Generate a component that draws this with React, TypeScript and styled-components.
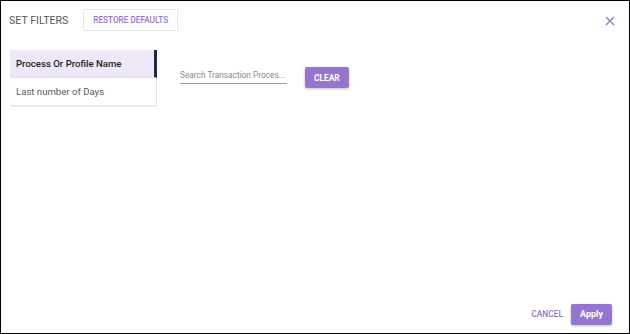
import React from "react";
import styled, { createGlobalStyle } from "styled-components";

const Global = createGlobalStyle`
  html, body { margin: 0; padding: 0; background: #fff; }
  body { font-family: Roboto, "Liberation Sans", sans-serif; }
  * { box-sizing: border-box; }
`;

const PURPLE = "#9575cd";

const Dialog = styled.div`
  width: 630px;
  height: 334px;
  border: 1px solid #000;
  background: #fff;
  display: flex;
  flex-direction: column;
`;

const Header = styled.div`
  height: 38px;
  display: flex;
  align-items: center;
  padding: 0 8px;
  gap: 15px;
`;

const Title = styled.div`
  font-size: 10.6px;
  color: #555;
`;

const OutlineButton = styled.button`
  height: 22px;
  padding: 0 9px;
  background: #fff;
  border: 1px solid #e4e4e4;
  border-radius: 2px;
  color: ${PURPLE};
  font-family: inherit;
  font-size: 8.2px;
  font-weight: 500;
  text-transform: uppercase;
`;

const Close = styled.button`
  margin-left: auto;
  margin-right: 4px;
  margin-top: 2px;
  width: 14px;
  height: 14px;
  padding: 0;
  border: 0;
  background: none;
  display: flex;
  align-items: center;
  justify-content: center;
`;

const Body = styled.div`
  flex: 1;
  display: flex;
  padding-top: 11px;
  padding-left: 9px;
`;

const SideList = styled.div`
  width: 147px;
  display: flex;
  flex-direction: column;
  align-self: flex-start;
`;

const SideItem = styled.div<{ $active?: boolean }>`
  height: 28px;
  display: flex;
  align-items: center;
  padding-left: 6px;
  font-size: 9.6px;
  font-weight: ${(p) => (p.$active ? 500 : 400)};
  color: ${(p) => (p.$active ? "#1f1f1f" : "#5a5a5a")};
  background: ${(p) => (p.$active ? "#ede7f6" : "#fff")};
  border-right: ${(p) => (p.$active ? "3px solid #1b2a4a" : "1px solid #e3e3e3")};
  border-bottom: 1px solid #e3e3e3;
  box-shadow: ${(p) => (p.$active ? "none" : "0 1px 1px rgba(0,0,0,0.06)")};
`;

const Content = styled.div`
  display: flex;
  align-items: flex-start;
  gap: 18px;
  padding-left: 23px;
  padding-top: 17px;
`;

const SearchInput = styled.input`
  width: 107px;
  height: 17px;
  border: 0;
  border-bottom: 1px solid #9e9e9e;
  outline: none;
  font-family: inherit;
  font-size: 8.3px;
  padding: 0;
  color: #333;
  text-overflow: ellipsis;
  &::placeholder { color: #8a8a8a; }
`;

const FilledButton = styled.button`
  height: 21px;
  padding: 0 9px;
  background: ${PURPLE};
  border: 0;
  border-radius: 2px;
  color: #fff;
  font-family: inherit;
  font-size: 8.4px;
  font-weight: 700;
  text-transform: uppercase;
  box-shadow: 0 1px 3px rgba(0,0,0,0.25);
`;

const ApplyButton = styled(FilledButton)`
  text-transform: none;
  font-size: 9px;
  width: 41px;
  padding: 0;
`;

const Footer = styled.div`
  height: 38px;
  display: flex;
  align-items: center;
  justify-content: flex-end;
  gap: 8px;
  padding-right: 17px;
`;

const TextButton = styled.button`
  background: none;
  border: 0;
  padding: 0;
  color: ${PURPLE};
  font-family: inherit;
  font-size: 8.4px;
  font-weight: 500;
  text-transform: uppercase;
`;

export default function App() {
  return (
    <>
      <Global />
      <Dialog>
        <Header>
          <Title>SET FILTERS</Title>
          <OutlineButton>Restore Defaults</OutlineButton>
          <Close aria-label="close">
            <svg width="10" height="10" viewBox="0 0 10 10">
              <path d="M1 1 L9 9 M9 1 L1 9" stroke={PURPLE} strokeWidth="1.4" />
            </svg>
          </Close>
        </Header>
        <Body>
          <SideList>
            <SideItem $active>Process Or Profile Name</SideItem>
            <SideItem>Last number of Days</SideItem>
          </SideList>
          <Content>
            <SearchInput placeholder="Search Transaction Proces..." />
            <FilledButton>Clear</FilledButton>
          </Content>
        </Body>
        <Footer>
          <TextButton>Cancel</TextButton>
          <ApplyButton>Apply</ApplyButton>
        </Footer>
      </Dialog>
    </>
  );
}
